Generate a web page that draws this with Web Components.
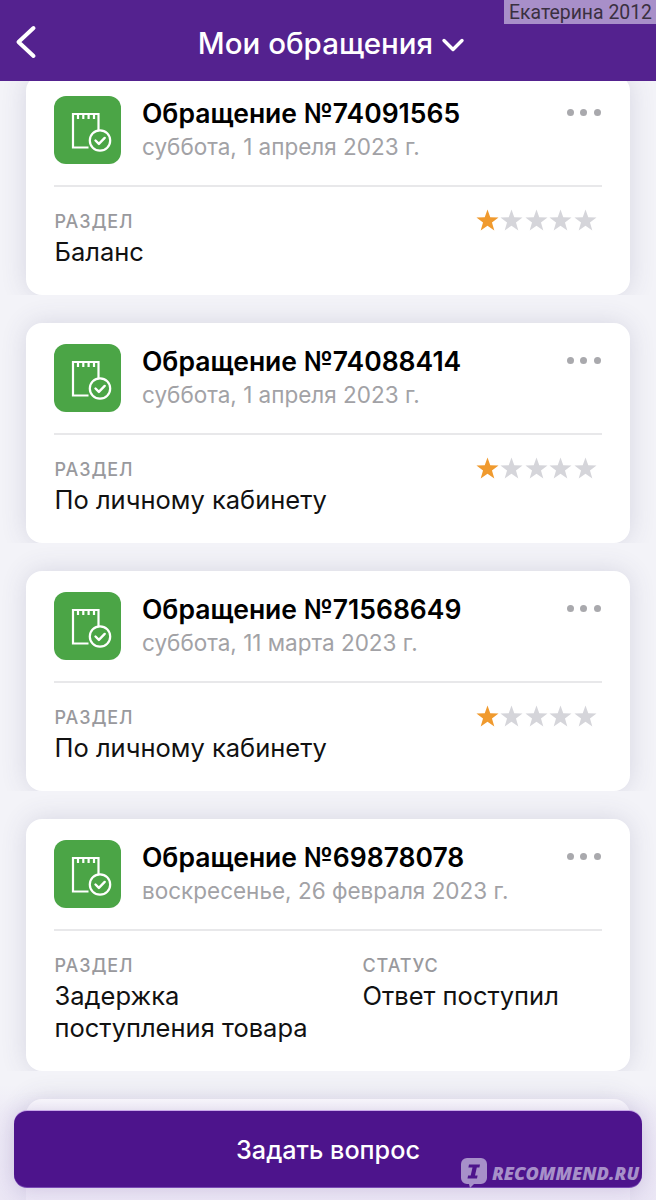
<!DOCTYPE html>
<html lang="ru"><head><meta charset="utf-8"><title>Мои обращения</title>
<style>
html,body{margin:0;padding:0;width:656px;height:1200px;overflow:hidden;background:#f3f3f8;font-family:Inter,"Noto Sans",sans-serif}
</style></head><body>
<template id="t-app"><style>
:host{display:flex;flex-direction:column;position:relative;width:656px;height:1200px;overflow:hidden;background:#f3f3f8}
main{flex:1;min-height:0;overflow:hidden;display:flex;flex-direction:column}
.scroll{margin-top:-34px;display:flex;flex-direction:column}
.veil{position:absolute;left:0;right:0;bottom:0;height:115px;z-index:2;background:linear-gradient(rgba(232,226,244,0),rgba(232,226,244,.45) 25%,rgba(232,226,244,.75));pointer-events:none}
</style><slot name="header"></slot><main><div class="scroll"><slot></slot></div></main><div class="veil"></div><slot name="over"></slot></template>

<template id="t-header"><style>
:host{display:flex;align-items:center;justify-content:center;position:relative;z-index:2;height:81px;box-sizing:border-box;padding:4px 0 0 7px;background:#54228f;color:#fff;flex:none}
.back{position:absolute;left:15px;top:25px;width:22px;height:34px}
h1{margin:0;font:500 29.5px/40px Inter,sans-serif;display:flex;align-items:center;gap:8px}
h1 svg{width:24px;height:16px;margin-top:5px}
</style>
<svg class="back" viewBox="0 0 22 34" fill="none" stroke="#fff" stroke-width="4" stroke-linecap="round" stroke-linejoin="round"><path d="M18.5 3 3.5 17 18.5 31"/></svg>
<h1><slot></slot><svg viewBox="0 0 24 16" fill="none" stroke="#fff" stroke-width="3.4" stroke-linecap="round" stroke-linejoin="round"><path d="M3 3.5 12 12.5 21 3.5"/></svg></h1></template>

<template id="t-card"><style>
:host{display:block;overflow:hidden;padding-top:28px;flex:none}
.card{margin:0 26px;background:#fff;border-radius:16px;box-shadow:0 0 26px rgba(70,70,110,.16);padding:21px 28px 0 28px;box-sizing:border-box}
.top{display:flex;align-items:flex-start;height:89px;border-bottom:2px solid #e8e8ea;position:relative}
.icon{flex:none;width:67px;height:68px}
.head{margin-left:21px;display:flex;flex-direction:column;min-height:60px}
.num{font:600 26.5px/30px Inter,sans-serif;color:#000;margin-top:2px;white-space:nowrap;min-height:30px}
.date{font:400 22.5px/28px Inter,sans-serif;color:#a2a2a6;margin-top:5px;white-space:nowrap}
.dots{position:absolute;right:1.5px;top:12.5px;display:flex;gap:6.5px}
.dots i{display:block;width:7px;height:7px;border-radius:50%;background:#a9a9ad}
.body{position:relative;display:grid;grid-template-columns:308px 1fr;padding:23px 0 27px}
.lab{font:500 18px/24px Inter,sans-serif;color:#99999d;letter-spacing:.9px;padding-left:.5px}
.val{font:400 25.5px/32px Inter,sans-serif;color:#111;margin-top:2px;min-height:32px;padding-left:.5px}
.stars{position:absolute;right:5px;top:22px;display:flex;gap:1.6px}
.stars svg{width:23px;height:22px;display:block}
</style>
<div class="card"><div class="top">
<svg class="icon" viewBox="0 0 67 68"><rect width="67" height="68" rx="12" fill="#4ba546"/><g fill="none" stroke="#fff" stroke-width="2.2"><path d="M34.5 51.500H19V18h25.500v17"/><path d="M24 18v5M29.300 18v5M34.600 18v5M40 18v5" stroke-width="2.200"/><circle cx="46" cy="44.500" r="10.200" fill="#4ba546"/><path d="M41.500 44.500l3.400 3.400 5.800-6" stroke-linecap="round" stroke-linejoin="round" stroke-width="2.400"/></g></svg>
<div class="head"><div class="num"><slot name="num"></slot></div><div class="date"><slot name="date"></slot></div></div>
<div class="dots"><i></i><i></i><i></i></div></div>
<div class="body" id="body"><div><div class="lab" id="l1">РАЗДЕЛ</div><div class="val"><slot name="section"></slot></div></div>
<div id="st" hidden><div class="lab">СТАТУС</div><div class="val"><slot name="status"></slot></div></div>
<div class="stars" id="stars"></div></div></div></template>

<template id="t-btn"><style>
:host{position:absolute;left:14px;top:1111px;width:628px;height:76px;z-index:3;display:flex;align-items:center;justify-content:center;box-sizing:border-box;background:#4d148c;border-radius:13px;color:#fff;font:500 25.2px/32px Inter,sans-serif;padding-top:2px;box-shadow:0 -1px 0 #c9a9ea,0 1px 0 #7a4bb5,0 2px 22px rgba(77,40,140,.2)}
</style><slot></slot></template>

<template id="t-tag"><style>
:host{position:absolute;right:0;top:0;z-index:4;width:152px;height:24px;background:#a88fc9;color:#3a3040;font:400 19.4px/26px Roboto,sans-serif;text-align:right;padding-right:4px;box-sizing:border-box;white-space:nowrap;overflow:hidden}
</style><slot></slot></template>

<template id="t-mark"><style>
:host{position:absolute;left:461px;top:1158px;z-index:4;display:flex;align-items:flex-start;gap:5px;color:#a790c9;font:italic 800 18.2px/22px "Open Sans",Lato,sans-serif;white-space:nowrap}
svg{width:26px;height:30px;flex:none}
span{margin-top:4px;display:block}
</style><svg viewBox="0 0 26 30"><path d="M6 0h14a6 6 0 0 1 6 6v14a6 6 0 0 1-6 6h-7l-4 4-1-4H6a6 6 0 0 1-6-6V6a6 6 0 0 1 6-6z" fill="#a790c9"/><path d="M8 6.500h11l-.6 3h-2.600l-1.800 8h2.600l-.6 3H6.500l.6-3h2.600l1.800-8H7.400z" fill="#4d148c"/></svg><span><slot></slot></span></template>

<app-shell>
<app-header slot="header">Мои обращения</app-header>
<ticket-card stars><span slot="num">Обращение №74091565</span><span slot="date">суббота, 1 апреля 2023 г.</span><span slot="section">Баланс</span></ticket-card>
<ticket-card stars><span slot="num">Обращение №74088414</span><span slot="date">суббота, 1 апреля 2023 г.</span><span slot="section">По личному кабинету</span></ticket-card>
<ticket-card stars><span slot="num">Обращение №71568649</span><span slot="date">суббота, 11 марта 2023 г.</span><span slot="section">По личному кабинету</span></ticket-card>
<ticket-card><span slot="num">Обращение №69878078</span><span slot="date">воскресенье, 26 февраля 2023 г.</span><span slot="section">Задержка<br>поступления товара</span><span slot="status">Ответ поступил</span></ticket-card>
<ticket-card blank></ticket-card>
<ask-button slot="over">Задать вопрос</ask-button>
<user-tag slot="over">Екатерина 2012</user-tag>
<water-mark slot="over">RECOMMEND.RU</water-mark>
</app-shell>
<script>
const mount=(el,id)=>{const r=el.attachShadow({mode:'open'});r.appendChild(document.getElementById(id).content.cloneNode(true));return r};
const simple=(tag,id)=>customElements.define(tag,class extends HTMLElement{constructor(){super();mount(this,id)}});
simple('app-shell','t-app');simple('app-header','t-header');simple('ask-button','t-btn');simple('user-tag','t-tag');simple('water-mark','t-mark');
const starPts=(()=>{const p=[];for(let k=0;k<10;k++){const r=k%2?4.7:11.6,a=(-90+36*k)*Math.PI/180;p.push((11.5+r*Math.cos(a)).toFixed(2)+','+(12+r*Math.sin(a)).toFixed(2))}return p.join(' ')})();
customElements.define('ticket-card',class extends HTMLElement{
 connectedCallback(){if(this.shadowRoot)return;const r=mount(this,'t-card');
  if(this.hasAttribute('blank')){r.getElementById('body').innerHTML='';r.getElementById('body').style.height='60px';return}
  if(this.hasAttribute('stars')){r.getElementById('stars').innerHTML=[0,1,2,3,4].map(i=>`<svg viewBox="0 0 23 22"><polygon points="${starPts}" fill="${i?'#d5d5da':'#f09a2e'}"/></svg>`).join('')}
  else r.getElementById('st').hidden=false;}
});
</script></body></html>
